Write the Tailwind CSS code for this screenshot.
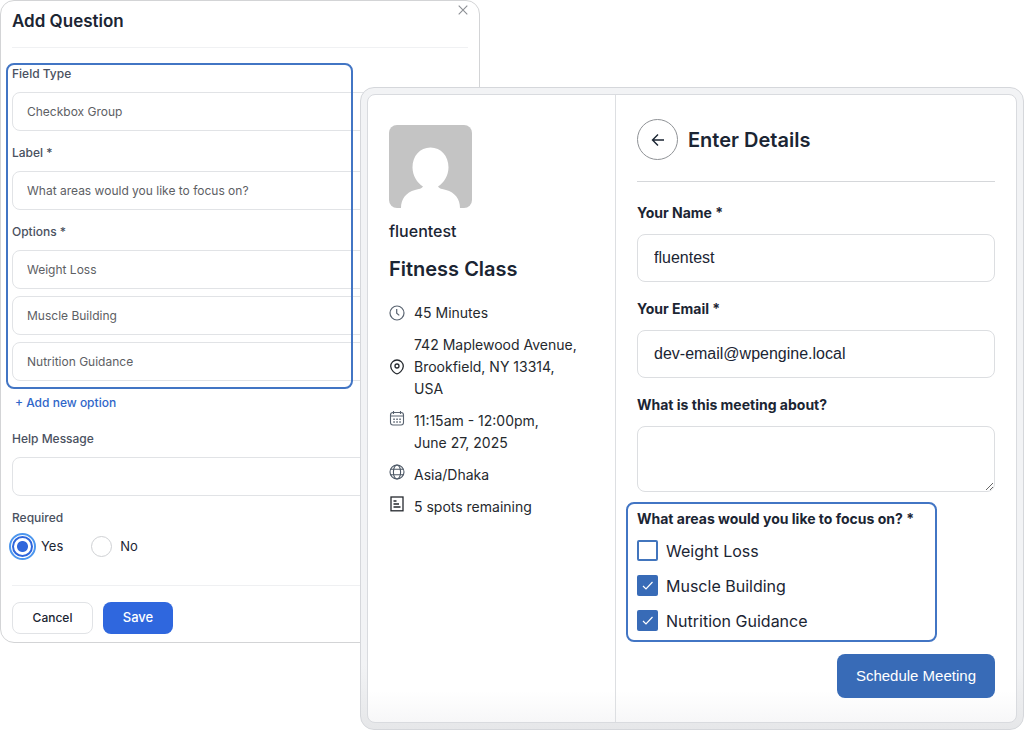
<!DOCTYPE html>
<html lang="en">
<head>
    <meta charset="UTF-8">
    <meta name="viewport" content="width=device-width, initial-scale=1.0">
    <title>Add Question</title>
    <script src="https://cdn.jsdelivr.net/npm/@tailwindcss/browser@4"></script>
</head>
<body class="bg-white font-[Inter,sans-serif] text-[#1b2533]">
    <div class="grid grid-cols-[360px_120px_1fr] items-start">

        <!-- Question editor -->
        <form class="col-start-1 col-span-2 row-start-1 rounded-[14px] border border-[#d3d4d6] bg-white px-[11px] pb-2">
            <header class="flex h-[47px] items-start justify-between border-b border-[#f0f1f3]">
                <h2 class="mt-2 text-[17px] leading-6 font-semibold">Add Question</h2>
                <button type="button" aria-label="Close" class="mt-1 text-[#8b8e93]">
                    <svg class="size-[10px]" viewBox="0 0 10 10" fill="none" stroke="currentColor" stroke-width="1.1"><path d="M.7.7l8.6 8.6M9.3.7L.7 9.3"/></svg>
                </button>
            </header>

            <div class="relative mt-4 flex flex-col gap-3 text-xs leading-5">
                <div class="flex flex-col gap-2">
                    <label for="type" class="font-medium text-[#4a5160]">Field Type</label>
                    <select id="type" class="h-[39px] w-full appearance-none rounded-lg border border-[#e1e3e6] px-[14px] text-[#5d6064]">
                        <option>Checkbox Group</option>
                    </select>
                </div>
                <div class="flex flex-col gap-2">
                    <label for="label" class="font-medium text-[#4a5160]">Label *</label>
                    <input id="label" type="text" value="What areas would you like to focus on?" class="h-[39px] w-full rounded-lg border border-[#e1e3e6] px-[14px] text-[#5d6064]">
                </div>
                <div class="flex flex-col gap-2">
                    <label for="option1" class="font-medium text-[#4a5160]">Options *</label>
                    <div class="flex flex-col gap-[7px]">
                        <input id="option1" type="text" value="Weight Loss" class="h-[39px] w-full rounded-lg border border-[#e1e3e6] px-[14px] text-[#5d6064]">
                        <input aria-label="Option 2" type="text" value="Muscle Building" class="h-[39px] w-full rounded-lg border border-[#e1e3e6] px-[14px] text-[#5d6064]">
                        <input aria-label="Option 3" type="text" value="Nutrition Guidance" class="h-[39px] w-full rounded-lg border border-[#e1e3e6] px-[14px] text-[#5d6064]">
                    </div>
                </div>
                <!-- highlight frame -->
                <div class="pointer-events-none absolute -top-px -bottom-2 -left-[6px] w-[347px] rounded-lg border-2 border-[#4275c4]"></div>
            </div>

            <button type="button" class="mt-3 ml-[3px] block text-xs leading-5 font-medium text-[#2f66c9]">+ Add new option</button>

            <div class="mt-4 flex flex-col gap-2 text-xs leading-5">
                <label for="help" class="font-medium text-[#4a5160]">Help Message</label>
                <input id="help" type="text" class="h-[39px] w-full rounded-lg border border-[#e1e3e6] px-[14px] text-[#5d6064]">
            </div>

            <div role="radiogroup" aria-labelledby="required" class="mt-3 text-[13px]">
                <p id="required" class="text-xs leading-5 font-medium text-[#4a5160]">Required</p>
                <div class="mt-2 flex items-center gap-7">
                    <label class="flex items-center gap-2">
                        <input type="radio" name="required" checked class="size-[21px] appearance-none rounded-full border-2 border-[#2f66dc] bg-[radial-gradient(circle,#2f66dc_5px,#fff_6px)] outline-2 outline-offset-1 outline-[#4c96ee]">
                        Yes
                    </label>
                    <label class="flex items-center gap-2">
                        <input type="radio" name="required" class="size-[21px] appearance-none rounded-full border border-[#cfd1d4]">
                        No
                    </label>
                </div>
            </div>

            <footer class="mt-7 flex gap-[10px] border-t border-[#eff0f2] pt-4 text-xs font-medium">
                <button type="button" class="h-8 w-[81px] rounded-lg border border-[#e1e3e6]">Cancel</button>
                <button type="submit" class="h-8 w-[70px] rounded-lg bg-[#2f67de] text-[13px] text-white">Save</button>
            </footer>
        </form>

        <!-- Booking form -->
        <main class="z-10 col-start-2 col-span-2 row-start-1 mt-[87px] rounded-[14px] border border-[#d5d7db] bg-linear-to-b from-[#f2f3f5] from-90% to-[#e6e7e9] p-[6px]">
            <div class="grid grid-cols-[248px_1fr] rounded-lg border border-[#d9dbdf] bg-linear-to-b from-white from-95% to-[#f7f7f8]">
                <aside class="border-r border-[#dddfe2] pt-[30px] pr-9 pl-[21px]">
                    <svg class="size-[83px] rounded-lg" viewBox="0 0 83 83">
                        <rect width="83" height="83" fill="#c4c4c4"/>
                        <path fill="#fff" d="M41.500 22.500C31 22.500 23.500 31 23.500 42.500C23.500 50 28 58 34 61.500C33 63.500 30 64 26 65C17 67.500 12 74 12 83H71C71 74 66 67.500 57 65C53 64 50 63.500 49 61.500C55 58 59.500 50 59.500 42.500C59.500 31 52 22.500 41.500 22.500Z"/>
                    </svg>
                    <p class="mt-3 text-base leading-[22px] font-medium">fluentest</p>
                    <h1 class="mt-[13px] text-xl leading-7 font-semibold">Fitness Class</h1>
                    <ul class="mt-[19px] flex flex-col gap-[10px] text-sm leading-[22px] text-[#25292e]">
                        <li class="flex items-center gap-[9px]">
                            <svg class="size-4 shrink-0" viewBox="0 0 16 16" fill="none" stroke="#596370" stroke-width="1.2"><circle cx="8" cy="8" r="7"/><path d="M7.700 4v4.200l2.600 2.200"/></svg>
                            45 Minutes
                        </li>
                        <li class="flex items-center gap-[9px]">
                            <svg class="size-4 shrink-0" viewBox="0 0 16 16" fill="none" stroke="#25292e" stroke-width="1.3"><path d="M8 14.900C6.500 14.900 1.700 11.300 1.700 7.300a6.300 6.300 0 0 1 12.600 0C14.300 11.300 9.500 14.900 8 14.900Z"/><circle cx="8" cy="7" r="2"/></svg>
                            742 Maplewood Avenue, Brookfield, NY 13314, USA
                        </li>
                        <li class="flex items-start gap-[9px]">
                            <svg class="size-4 shrink-0" viewBox="0 0 16 16" fill="none" stroke="#596370" stroke-width="1.1"><rect x="1.500" y="2.500" width="13" height="12.500" rx="2.500"/><path d="M4.500 1v3M11.500 1v3M1.500 6h13"/><path stroke-width="1.500" stroke-dasharray="1.500 1.500" d="M4.300 9.200h7.500M4.300 12h7.500"/></svg>
                            <span>11:15am - 12:00pm,<br>June 27, 2025</span>
                        </li>
                        <li class="flex items-start gap-[9px]">
                            <svg class="size-4 shrink-0" viewBox="0 0 16 16" fill="none" stroke="#4d5866" stroke-width="1.1"><circle cx="8" cy="8" r="7"/><ellipse cx="8" cy="8" rx="3.600" ry="7"/><path d="M1.700 5.300h12.600M1.700 10.700h12.600"/></svg>
                            Asia/Dhaka
                        </li>
                        <li class="flex items-start gap-[9px]">
                            <svg class="size-4 shrink-0" viewBox="0 0 16 16" fill="none" stroke="#25292e" stroke-width="1.300"><rect x="2" y="1" width="12" height="13.800"/><path d="M4.500 5h3M4.500 8h5.500M4.500 11h7"/></svg>
                            5 spots remaining
                        </li>
                    </ul>
                </aside>

                <form class="flex flex-col px-[21px] py-6">
                    <div class="flex items-center gap-[10px] border-b border-[#d5d7da] pb-[21px]">
                        <button type="button" aria-label="Back" class="flex size-[41px] items-center justify-center rounded-full border border-[#8f9296]">
                            <svg class="size-[14px]" viewBox="0 0 14 14" fill="none" stroke="#1b2533" stroke-width="1.4"><path d="M13 7H1.500M7 1.500L1.500 7L7 12.500"/></svg>
                        </button>
                        <h2 class="text-xl leading-7 font-semibold">Enter Details</h2>
                    </div>

                    <label for="name" class="mt-5 text-sm leading-[22px] font-bold">Your Name *</label>
                    <input id="name" type="text" value="fluentest" class="mt-[10px] h-12 rounded-lg border border-[#dcdee1] px-4 font-['Liberation_Sans',sans-serif] text-base">

                    <label for="email" class="mt-4 text-sm leading-[22px] font-bold">Your Email *</label>
                    <input id="email" type="email" value="dev-email@wpengine.local" class="mt-[10px] h-12 rounded-lg border border-[#dcdee1] px-4 font-['Liberation_Sans',sans-serif] text-base">

                    <label for="about" class="mt-4 text-sm leading-[22px] font-bold">What is this meeting about?</label>
                    <textarea id="about" class="mt-[10px] h-[66px] rounded-lg border border-[#dcdee1] px-4 py-2"></textarea>

                    <div role="group" aria-labelledby="focus" class="mt-[10px] -ml-[11px] h-[140px] w-[311px] rounded-lg border-2 border-[#4275c4] pt-1 pl-[9px]">
                        <p id="focus" class="text-sm leading-[22px] font-bold">What areas would you like to focus on? *</p>
                        <div class="mt-[10px] flex flex-col gap-[14px] text-base leading-[22px]">
                            <label class="flex h-[21px] items-center gap-2">
                                <input type="checkbox" class="size-[21px] appearance-none rounded-[2px] border-2 border-[#4275bd]">
                                Weight Loss
                            </label>
                            <label class="relative flex h-[21px] items-center gap-2">
                                <input type="checkbox" checked class="size-[21px] appearance-none rounded-[2px] bg-[#386bb7]">
                                <svg class="pointer-events-none absolute left-0 size-[21px]" viewBox="0 0 21 21" fill="none" stroke="#fff" stroke-width="1.200"><path d="M6 11l3 3 6.500-7"/></svg>
                                Muscle Building
                            </label>
                            <label class="relative flex h-[21px] items-center gap-2">
                                <input type="checkbox" checked class="size-[21px] appearance-none rounded-[2px] bg-[#386bb7]">
                                <svg class="pointer-events-none absolute left-0 size-[21px]" viewBox="0 0 21 21" fill="none" stroke="#fff" stroke-width="1.200"><path d="M6 11l3 3 6.500-7"/></svg>
                                Nutrition Guidance
                            </label>
                        </div>
                    </div>

                    <button type="submit" class="mt-3 h-11 self-end rounded-lg bg-[#386bb7] px-[19px] font-['Liberation_Sans',sans-serif] text-[15px] text-white">Schedule Meeting</button>
                </form>
            </div>
        </main>
    </div>
</body>
</html>
